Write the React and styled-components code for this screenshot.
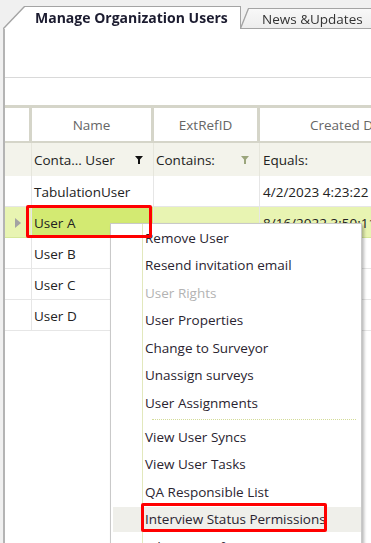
import React from 'react';
import styled, { createGlobalStyle } from 'styled-components';

const Global = createGlobalStyle`
  html, body { margin: 0; padding: 0; background: #f0f0f0; }
  body { font-family: "Open Sans", "Noto Sans", sans-serif; font-size: 13.5px; color: #222; }
  * { box-sizing: border-box; }
`;

const Page = styled.div`
  position: relative;
  width: 371px;
  height: 543px;
  overflow: hidden;
  background: #f0f0f0;
  display: flex;
  flex-direction: column;
`;

const TabBar = styled.div`
  height: 29px;
  flex: none;
  display: flex;
  align-items: flex-end;
  padding-left: 4px;
  position: relative;
  z-index: 2;
  margin-bottom: -1px;
`;

const TabOutline = styled.div`
  flex: ${p => (p.$grow ? 1 : 'none')};
  margin-left: ${p => p.$ml || 0}px;
  filter: drop-shadow(1px 0 0 #a4a4a4) drop-shadow(-1px 0 0 #a4a4a4) drop-shadow(0 -1px 0 #a4a4a4);
  position: relative;
  z-index: ${p => (p.$active ? 2 : 1)};
`;

const TabFace = styled.div`
  height: ${p => p.$h}px;
  width: ${p => (p.$w ? `${p.$w}px` : 'auto')};
  background: ${p => (p.$active ? '#fff' : 'linear-gradient(#f8f8f8, #ededed)')};
  clip-path: polygon(${p => p.$slant}px 0, 100% 0, 100% 100%, 0 100%);
  display: flex;
  align-items: center;
  padding-left: ${p => p.$pl}px;
  padding-bottom: ${p => (p.$active ? 2 : 0)}px;
  font-weight: ${p => (p.$active ? 700 : 400)};
  font-size: ${p => (p.$active ? 14 : 13.5)}px;
  color: ${p => (p.$active ? '#1c1c30' : '#333')};
  white-space: nowrap;
  border-bottom: ${p => (p.$active ? 'none' : '1px solid #a4a4a4')};
`;

const Panel = styled.div`
  flex: 1;
  margin-left: 3px;
  background: #fff;
  border-top: 1px solid #a4a4a4;
  border-left: 2px solid #b4b4b4;
  display: flex;
  flex-direction: column;
`;

const Toolbar = styled.div`
  height: 49px;
  flex: none;
  border-bottom: 1px solid #d9d9d9;
`;

const Spacer = styled.div`
  height: 27px;
  flex: none;
`;

const HeaderRow = styled.div`
  display: flex;
  height: 38px;
  flex: none;
  border-top: 3px solid #d5d5c9;
  border-bottom: 2px solid #d5d5c9;
`;

const HeaderCell = styled.div`
  width: ${p => p.$w}px;
  flex: none;
  border-right: 3px solid #d5d5c9;
  display: flex;
  align-items: center;
  justify-content: center;
  padding-top: 1px;
  color: #666;
  white-space: nowrap;
`;

const FilterRow = styled.div`
  display: flex;
  height: 33px;
  flex: none;
  background: #f3f3eb;
`;

const FilterCell = styled.div`
  width: ${p => p.$w}px;
  flex: none;
  display: flex;
  align-items: center;
  justify-content: space-between;
  padding-left: ${p => p.$pl || 2}px;
  padding-right: 10px;
  padding-top: 1px;
  border-right: 1px solid #e6e6dc;
  white-space: nowrap;
`;

const Row = styled.div`
  display: flex;
  height: 31px;
  flex: none;
  border-bottom: 1px solid ${p => (p.$selected ? '#d6e89a' : '#e6e6e6')};
  background: ${p => (p.$selected ? '#e8f4b2' : '#fff')};
`;

const Cell = styled.div`
  width: ${p => (p.$w ? `${p.$w}px` : 'auto')};
  flex: ${p => (p.$w ? 'none' : 1)};
  display: flex;
  align-items: center;
  padding-left: ${p => p.$pl || 2}px;
  padding-top: 2px;
  border-right: ${p => (p.$line ? '1px solid #e6e6e6' : 'none')};
  background: ${p => p.$bg || 'transparent'};
  white-space: nowrap;
  overflow: hidden;
`;

const Funnel = ({ color }) => (
  <svg width="8" height="8" viewBox="0 0 8 8">
    <path d="M0 0H8L5 3.6V8H3V3.6Z" fill={color} />
  </svg>
);

const RowArrow = () => (
  <svg width="6" height="10" viewBox="0 0 6 10">
    <path d="M0 0L6 5L0 10Z" fill="#a3a3a3" />
  </svg>
);

const Annotation = styled.div`
  position: absolute;
  left: ${p => p.$x}px;
  top: ${p => p.$y}px;
  width: ${p => p.$w}px;
  height: ${p => p.$h}px;
  border: 3px solid #ff0000;
  border-radius: 2px;
  pointer-events: none;
  z-index: 5;
`;

const Menu = styled.div`
  position: absolute;
  left: 110px;
  top: 223px;
  width: 252px;
  height: 340px;
  border: 1px solid #c9c9c9;
  background: linear-gradient(to right, #fff 0 31px, #e2e8bc 31px 32px, #fff 32px);
  box-shadow: 2px 2px 3px rgba(0, 0, 0, 0.28);
  z-index: 4;
  display: flex;
  flex-direction: column;
`;

const MenuItem = styled.div`
  position: relative;
  height: 25px;
  margin: 1.25px 0 1.25px 2px;
  padding-left: 32px;
  display: flex;
  align-items: center;
  flex: none;
  color: ${p => (p.$disabled ? '#b3b3b3' : '#2a2430')};
  background: ${p => (p.$hover ? '#efefea' : 'transparent')};
  white-space: nowrap;
`;

const Separator = styled.div`
  height: 6.5px;
  flex: none;
  padding-top: 2.5px;
  padding-left: 41px;
  &::after {
    content: '';
    display: block;
    width: 204px;
    border-top: 1px dotted #d3dc98;
  }
`;

const HighlightBox = styled.div`
  position: absolute;
  left: 28px;
  top: -4px;
  width: 186px;
  height: 29px;
  border: 3px solid #ff0000;
  border-radius: 2px;
`;

const rows = [
  { name: 'TabulationUser', date: '4/2/2023 4:23:22 PM' },
  { name: 'User A', date: '8/16/2022 3:50:11 PM', selected: true },
  { name: 'User B', date: '8/16/2022 3:5' },
  { name: 'User C', date: '8/16/2022 3:5' },
  { name: 'User D', date: '8/16/2022 3:52:' },
];

const menu = [
  { label: 'Remove User' },
  { label: 'Resend invitation email' },
  { label: 'User Rights', disabled: true },
  { label: 'User Properties' },
  { label: 'Change to Surveyor' },
  { label: 'Unassign surveys' },
  { label: 'User Assignments' },
  { sep: true },
  { label: 'View User Syncs' },
  { label: 'View User Tasks' },
  { label: 'QA Responsible List' },
  { label: 'Interview Status Permissions', hover: true, boxed: true },
  { label: 'Edit QC Config...' },
];

export default function App() {
  return (
    <>
      <Global />
      <Page>
        <TabBar>
          <TabOutline $active>
            <TabFace $active $w={236} $h={22} $slant={21} $pl={31}>
              Manage Organization Users
            </TabFace>
          </TabOutline>
          <TabOutline $grow $ml={1}>
            <TabFace $h={20} $slant={8} $pl={21}>
              News &amp;Updates
            </TabFace>
          </TabOutline>
        </TabBar>
        <Panel>
          <Toolbar />
          <Spacer />
          <HeaderRow>
            <HeaderCell $w={27} />
            <HeaderCell $w={122}>Name</HeaderCell>
            <HeaderCell $w={106}>ExtRefID</HeaderCell>
            <HeaderCell $w={186}>Created Date</HeaderCell>
          </HeaderRow>
          <FilterRow>
            <FilterCell $w={27} />
            <FilterCell $w={122}>
              <span>Conta... User</span>
              <Funnel color="#111" />
            </FilterCell>
            <FilterCell $w={106}>
              <span>Contains:</span>
              <Funnel color="#9ba57c" />
            </FilterCell>
            <FilterCell $w={186} $pl={3}>
              <span>Equals:</span>
            </FilterCell>
          </FilterRow>
          {rows.map(r => (
            <Row key={r.name} $selected={r.selected}>
              <Cell $w={27} $line $pl={10}>
                {r.selected && <RowArrow />}
              </Cell>
              <Cell $w={122} $line $bg={r.selected ? '#d3ea72' : undefined}>
                {r.name}
              </Cell>
              <Cell $w={106} $line />
              <Cell $pl={3}>{r.date}</Cell>
            </Row>
          ))}
        </Panel>
        <Annotation $x={26} $y={205} $w={126} $h={33} />
        <Menu>
          {menu.map((m, i) =>
            m.sep ? (
              <Separator key={i} />
            ) : (
              <MenuItem key={i} $disabled={m.disabled} $hover={m.hover}>
                {m.label}
                {m.boxed && <HighlightBox />}
              </MenuItem>
            )
          )}
        </Menu>
      </Page>
    </>
  );
}
